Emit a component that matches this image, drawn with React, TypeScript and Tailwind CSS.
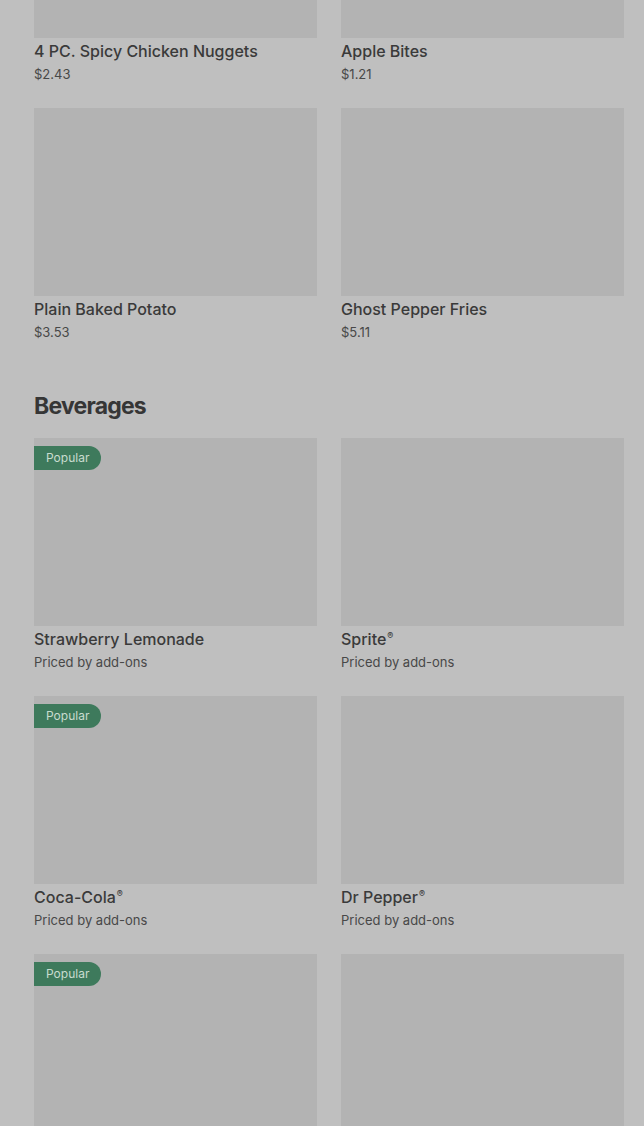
type Item = {
  name?: string;
  price?: string;
  popular?: boolean;
  reg?: boolean;
};

const sides: Item[] = [
  { name: "4 PC. Spicy Chicken Nuggets", price: "$2.43" },
  { name: "Apple Bites", price: "$1.21" },
  { name: "Plain Baked Potato", price: "$3.53" },
  { name: "Ghost Pepper Fries", price: "$5.11" },
];

// last row is only partly scrolled into view, so no captions there
const beverages: Item[] = [
  { name: "Strawberry Lemonade", price: "Priced by add-ons", popular: true },
  { name: "Sprite", price: "Priced by add-ons", reg: true },
  { name: "Coca-Cola", price: "Priced by add-ons", popular: true, reg: true },
  { name: "Dr Pepper", price: "Priced by add-ons", reg: true },
  { popular: true },
  {},
];

function Card({ item }: { item: Item }) {
  return (
    <div>
      <div className="relative h-[188px] bg-[#b3b3b3]">
        {item.popular && (
          <span className="absolute left-0 top-2 h-6 rounded-r-full bg-[#3e7a5c] pl-3 pr-3 text-[12px] leading-6 text-[#c9dccf]">
            Popular
          </span>
        )}
      </div>
      {item.name && (
        <div className="pb-px">
          <div className="pt-[3px] text-[16px] leading-5 font-medium text-[#3a3a3a]">
            {item.name}
            {item.reg && (
              <span className="relative -top-[6px] ml-[1px] text-[9px] leading-none">®</span>
            )}
          </div>
          <div className="pt-[4px] text-[13px] leading-[18px] text-[#484848]">
            {item.price}
          </div>
        </div>
      )}
    </div>
  );
}

export default function App() {
  return (
    <div
      className="h-[1126px] overflow-hidden bg-[#bfbfbf] pl-[34px] pr-[20px]"
      style={{ fontFamily: "Inter, 'Liberation Sans', sans-serif" }}
    >
      <div className="-mt-[150px] grid grid-cols-2 gap-x-6 gap-y-6">
        {sides.map((s, i) => (
          <Card key={i} item={s} />
        ))}
      </div>

      <h2 className="pt-[48px] pb-4 text-[23px] leading-8 font-bold tracking-[-0.8px] text-[#363636]">
        Beverages
      </h2>

      <div className="grid grid-cols-2 gap-x-6 gap-y-6">
        {beverages.map((b, i) => (
          <Card key={i} item={b} />
        ))}
      </div>
    </div>
  );
}
